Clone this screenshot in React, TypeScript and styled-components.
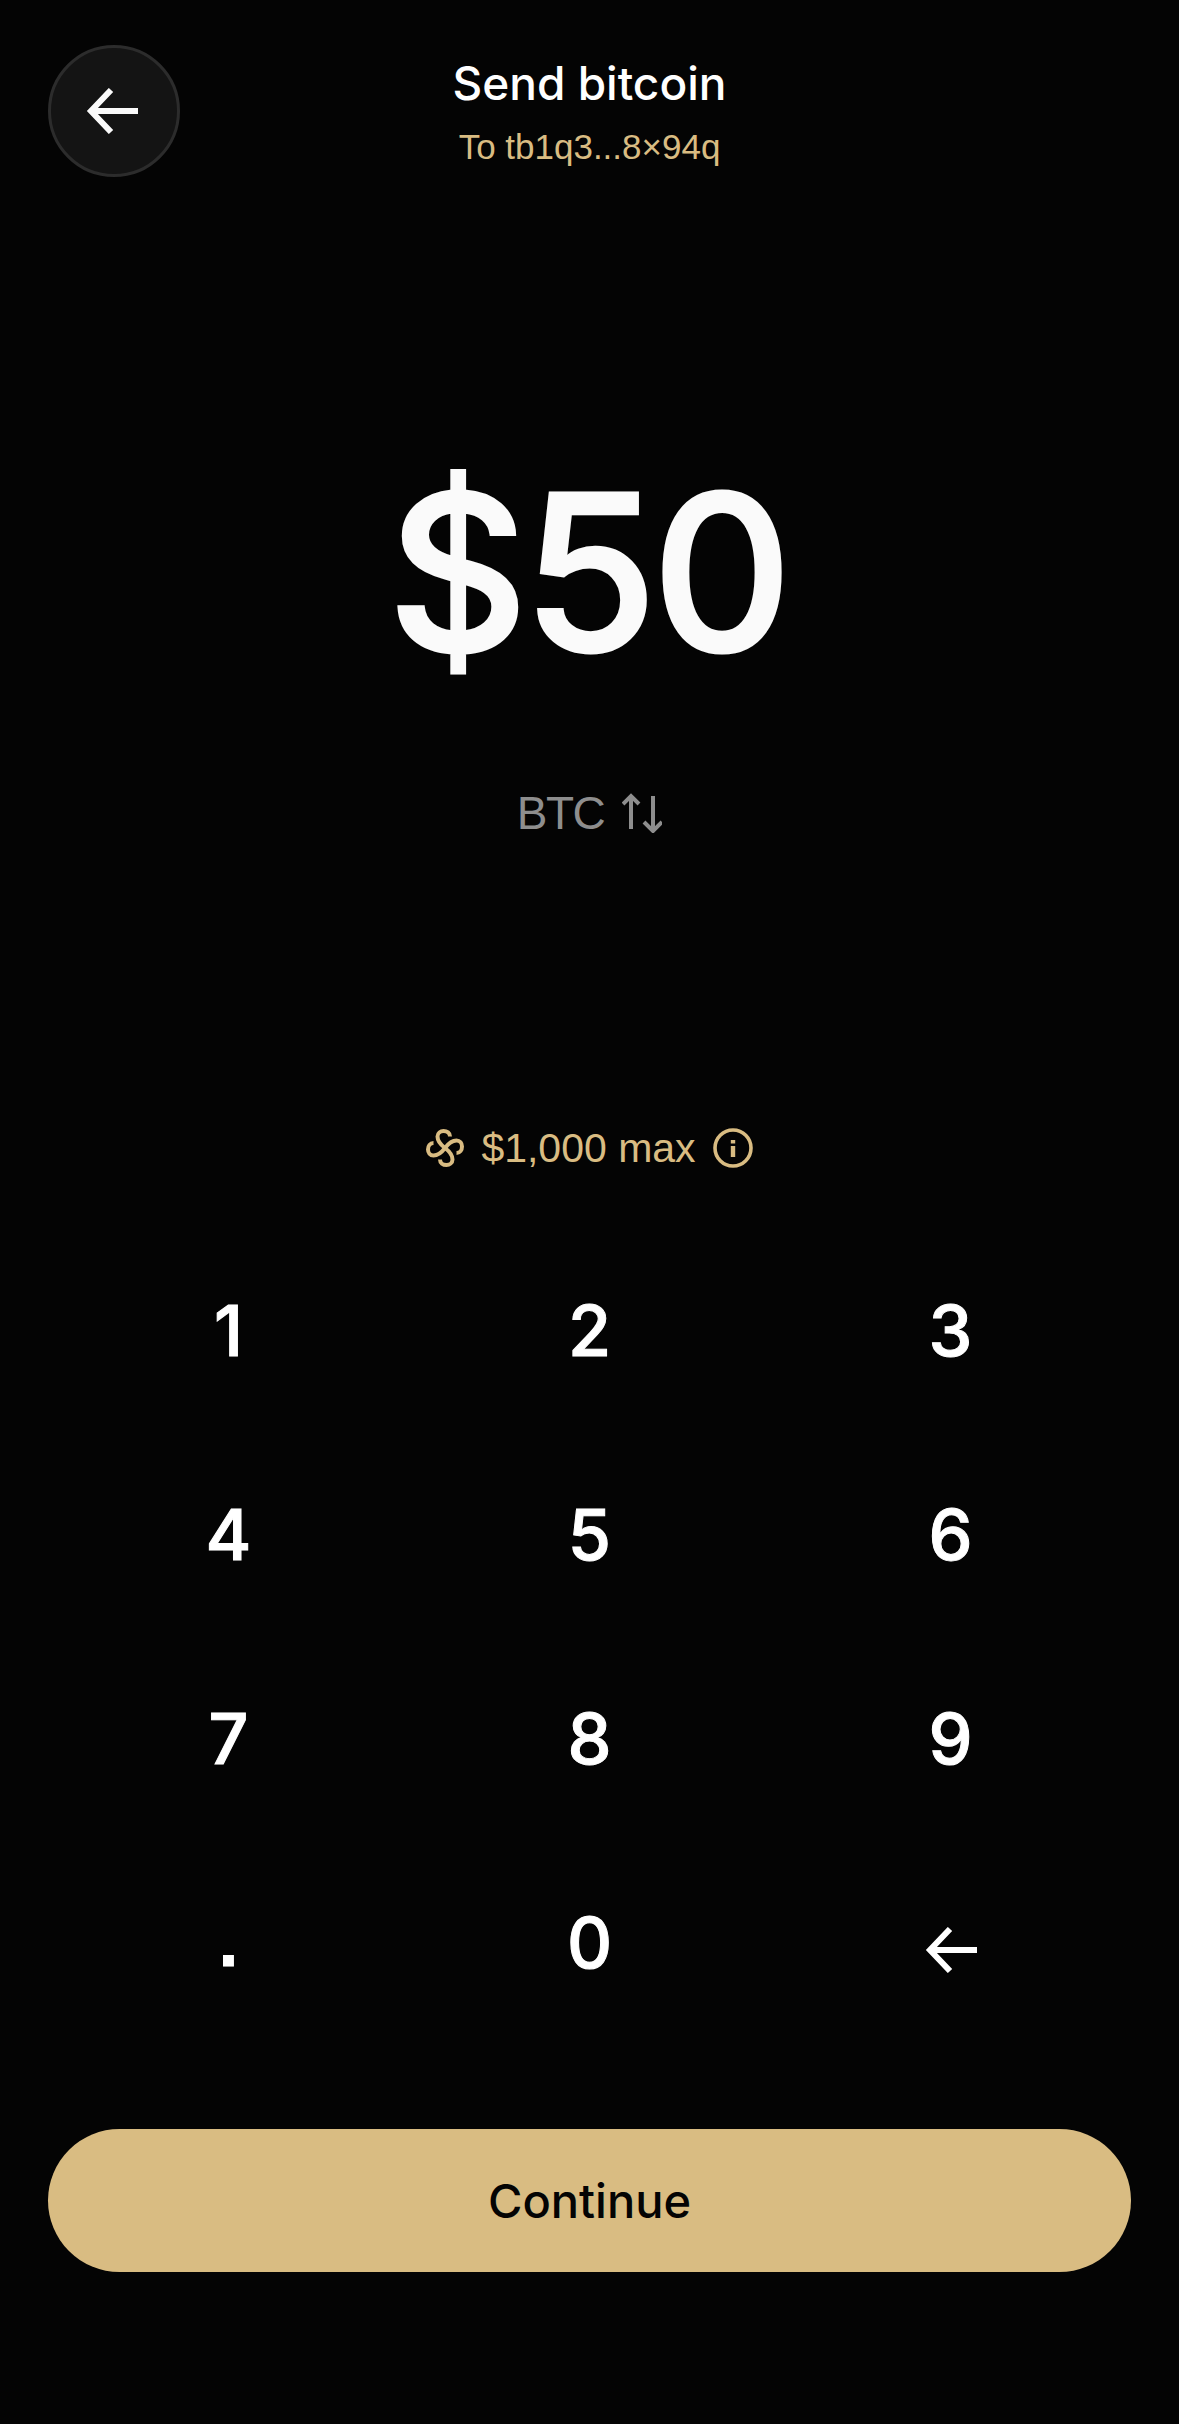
import React from 'react';
import styled, { createGlobalStyle } from 'styled-components';

const GlobalStyle = createGlobalStyle`
  html, body {
    margin: 0;
    padding: 0;
    background: #040404;
  }
`;

const Screen = styled.div`
  width: 1179px;
  height: 2424px;
  box-sizing: border-box;
  padding: 45px 48px 0;
  display: flex;
  flex-direction: column;
  background: #040404;
  font-family: "Inter", "Liberation Sans", sans-serif;
  color: #fff;
`;

const Header = styled.div`
  display: grid;
  grid-template-columns: 132px 1fr 132px;
  height: 132px;
`;

const BackButton = styled.button`
  width: 132px;
  height: 132px;
  padding: 0 4px 0 0;
  border-radius: 50%;
  border: 3px solid #2c2c2c;
  background: #141414;
  display: flex;
  align-items: center;
  justify-content: center;
  color: #fafafa;
`;

const HeaderText = styled.div`
  display: flex;
  flex-direction: column;
  align-items: center;
`;

const Title = styled.div`
  font-size: 46px;
  font-weight: 500;
  line-height: 54px;
  margin-top: 11px;
`;

const Subtitle = styled.div`
  font-family: "Liberation Sans", sans-serif;
  font-size: 35px;
  line-height: 44px;
  margin-top: 15px;
  color: #d9bc82;
`;

const AmountBlock = styled.div`
  margin-top: 265px;
  display: flex;
  flex-direction: column;
  align-items: center;
`;

const Amount = styled.div`
  font-size: 217px;
  font-weight: 500;
  line-height: 260px;
  letter-spacing: -5px;
  margin-right: 4px;
  color: #fafafa;
  -webkit-text-stroke: 3px #fafafa;
`;

const Unit = styled.div`
  margin-top: 84px;
  display: flex;
  align-items: center;
  gap: 18px;
  font-family: "Liberation Sans", sans-serif;
  font-size: 46px;
  letter-spacing: -1.5px;
  line-height: 54px;
  color: #8e8e8e;
`;

const Limit = styled.div`
  margin-top: 282px;
  display: flex;
  align-items: center;
  justify-content: center;
  gap: 17px;
  font-family: "Liberation Sans", sans-serif;
  font-size: 41px;
  line-height: 52px;
  color: #d9bc82;
`;

const Keypad = styled.div`
  margin-top: 54px;
  display: grid;
  grid-template-columns: repeat(3, 1fr);
  grid-auto-rows: 204px;
`;

const Key = styled.button`
  border: none;
  background: none;
  padding: 0;
  display: flex;
  align-items: center;
  justify-content: center;
  font-family: "Inter", sans-serif;
  font-size: 70px;
  font-weight: 500;
  color: #fff;
  -webkit-text-stroke: 1px #fff;
`;

const DotKey = styled(Key)`
  font-family: "Liberation Sans", sans-serif;
  font-weight: 700;
`;

const BackspaceKey = styled(Key)`
  padding-top: 16px;
`;

const ContinueButton = styled.button`
  margin-top: 85px;
  height: 143px;
  border: none;
  border-radius: 72px;
  background: #d9bc82;
  color: #040404;
  font-family: "Inter", sans-serif;
  font-size: 47px;
  font-weight: 500;
`;

const ArrowLeft = () => (
  <svg width="52" height="46" viewBox="0 0 52 46" fill="none">
    <path d="M52 23H5M25 2L5 23l20 21" stroke="currentColor" strokeWidth="6" />
  </svg>
);

const SwapIcon = () => (
  <svg width="40" height="40" viewBox="0 0 40 40" fill="none" stroke="#8e8e8e" strokeWidth="4">
    <path d="M9 36V3M1 11l8-8 8 8" />
    <path d="M31 3v35M22 29l9 9 9-9" />
  </svg>
);

const SparkIcon = () => (
  <svg width="38" height="38" viewBox="-19 -19 38 38" fill="none" stroke="#d9bc82" strokeWidth="4">
    {[0, 90, 180, 270].map((angle) => (
      <path
        key={angle}
        transform={`rotate(${angle})`}
        d="M0 0C-4-3-7.5-7-7.5-11.5C-7.5-15-4.5-17-1.5-17C2-17 5-15 5-11.5"
      />
    ))}
  </svg>
);

const InfoIcon = () => (
  <svg width="40" height="40" viewBox="0 0 40 40" fill="none" stroke="#d9bc82" strokeWidth="3.6">
    <circle cx="20" cy="20" r="18" />
    <path d="M20 18v11M20 12v3.4" strokeWidth="4.4" />
  </svg>
);

const KEYS = ['1', '2', '3', '4', '5', '6', '7', '8', '9'];

export default function App() {
  return (
    <>
      <GlobalStyle />
      <Screen>
        <Header>
          <BackButton>
            <ArrowLeft />
          </BackButton>
          <HeaderText>
            <Title>Send bitcoin</Title>
            <Subtitle>To tb1q3...8×94q</Subtitle>
          </HeaderText>
        </Header>
        <AmountBlock>
          <Amount>$50</Amount>
          <Unit>
            BTC <SwapIcon />
          </Unit>
        </AmountBlock>
        <Limit>
          <SparkIcon />
          $1,000 max
          <InfoIcon />
        </Limit>
        <Keypad>
          {KEYS.map((k) => (
            <Key key={k}>{k}</Key>
          ))}
          <DotKey>.</DotKey>
          <Key>0</Key>
          <BackspaceKey>
            <ArrowLeft />
          </BackspaceKey>
        </Keypad>
        <ContinueButton>Continue</ContinueButton>
      </Screen>
    </>
  );
}
